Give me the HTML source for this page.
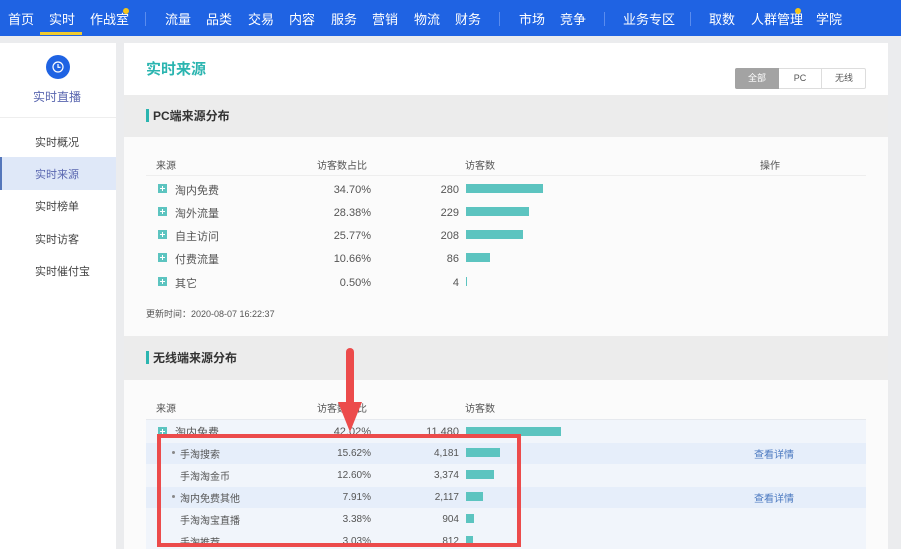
<!DOCTYPE html>
<html><head><meta charset="utf-8">
<style>
*{margin:0;padding:0;box-sizing:border-box}
body{width:901px;height:549px;overflow:hidden;background:#ebecee;font-family:"Liberation Sans","Noto Sans CJK SC",sans-serif;position:relative;color:#555}
.a{position:absolute;white-space:nowrap}
.nav{position:absolute;left:0;top:0;width:901px;height:36px;background:#1f63e3}
.nav span{position:absolute;top:9px;color:#fff;font-size:13px}
.sep{position:absolute;top:12px;width:1px;height:14px;background:#5a8cee}
.dot{position:absolute;width:6px;height:6px;border-radius:3px;background:#f5c518}
.t{font-size:10px;color:#555}
.n{margin-top:2px}
.bar{position:absolute;height:9px;background:#5cc4c0}
.plus{position:absolute;width:9px;height:9px;background:#5cc4c0}
.plus:before{content:"";position:absolute;left:2px;top:4px;width:5px;height:1px;background:#fff}
.plus:after{content:"";position:absolute;left:4px;top:2px;width:1px;height:5px;background:#fff}
.r{text-align:right}
</style></head><body>
<div class="nav">
<span style="left:8px">首页</span>
<span style="left:49px;color:#fff">实时</span>
<div class="a" style="left:40px;top:32px;width:42px;height:3px;background:#f1cb2e"></div>
<span style="left:90px">作战室</span><div class="dot" style="left:123px;top:8px"></div>
<div class="sep" style="left:145px"></div>
<span style="left:165px">流量</span><span style="left:206px">品类</span><span style="left:248px">交易</span><span style="left:289px">内容</span><span style="left:331px">服务</span><span style="left:372px">营销</span><span style="left:414px">物流</span><span style="left:455px">财务</span>
<div class="sep" style="left:499px"></div>
<span style="left:519px">市场</span><span style="left:560px">竞争</span>
<div class="sep" style="left:604px"></div>
<span style="left:623px">业务专区</span>
<div class="sep" style="left:690px"></div>
<span style="left:709px">取数</span><span style="left:751px">人群管理</span><div class="dot" style="left:795px;top:8px"></div>
<span style="left:816px">学院</span>
</div>
<!-- sidebar -->
<div class="a" style="left:0;top:43px;width:116px;height:506px;background:#fff"></div>
<div class="a" style="left:0;top:117px;width:116px;height:1px;background:#eee"></div>
<div class="a" style="left:46px;top:55px;width:24px;height:24px;border-radius:12px;background:#1f63e3"></div>
<svg class="a" style="left:51px;top:60px" width="14" height="14" viewBox="0 0 14 14"><circle cx="7" cy="7" r="5" fill="none" stroke="#fff" stroke-width="1.2"/><path d="M7 4v3.3h2.5" fill="none" stroke="#fff" stroke-width="1.2"/></svg>
<div class="a" style="left:33px;top:88px;font-size:12px;color:#5a67b0">实时直播</div>
<div class="a" style="left:0;top:157px;width:116px;height:33px;background:#dfe8f8;border-left:2px solid #5577bb"></div>
<div class="a" style="left:35px;top:134px;font-size:11px;color:#444">实时概况</div>
<div class="a" style="left:35px;top:166px;font-size:11px;color:#5a67b0">实时来源</div>
<div class="a" style="left:35px;top:198px;font-size:11px;color:#444">实时榜单</div>
<div class="a" style="left:35px;top:231px;font-size:11px;color:#444">实时访客</div>
<div class="a" style="left:35px;top:263px;font-size:11px;color:#444">实时催付宝</div>
<!-- main -->
<div class="a" style="left:124px;top:43px;width:764px;height:52px;background:#fff"></div>
<div class="a" style="left:146px;top:58px;font-size:15px;font-weight:bold;color:#2bb5b0">实时来源</div>
<div class="a" style="left:735px;top:68px;width:131px;height:21px;border:1px solid #ddd;background:#fff;border-radius:2px"></div>
<div class="a" style="left:735px;top:68px;width:44px;height:21px;background:#a3a3a3;color:#fff;font-size:9px;text-align:center;line-height:21px;border-radius:2px 0 0 2px">全部</div>
<div class="a" style="left:779px;top:69px;width:43px;height:19px;border-right:1px solid #ddd;font-size:9px;text-align:center;line-height:19px;color:#555">PC</div>
<div class="a" style="left:822px;top:69px;width:44px;font-size:9px;text-align:center;line-height:19px;color:#555">无线</div>
<div class="a" style="left:124px;top:95px;width:764px;height:42px;background:#ececec"></div>
<div class="a" style="left:146px;top:109px;width:3px;height:13px;background:#2bb5b0"></div>
<div class="a" style="left:153px;top:107px;font-size:12px;font-weight:bold;color:#333">PC端来源分布</div>
<div class="a" style="left:124px;top:137px;width:764px;height:199px;background:#fbfbfb"></div>
<div class="a t" style="left:156px;top:157px">来源</div>
<div class="a t" style="left:317px;top:157px">访客数占比</div>
<div class="a t" style="left:465px;top:157px">访客数</div>
<div class="a t" style="left:760px;top:157px">操作</div>
<div class="a" style="left:146px;top:175px;width:720px;height:1px;background:#eee"></div>
<div class="plus" style="left:158px;top:184px"></div><div class="a t" style="left:175px;top:182px;font-size:11px">淘内免费</div><div class="a t r n" style="left:300px;top:182px;width:71px;font-size:11px">34.70%</div><div class="a t r n" style="left:400px;top:182px;width:59px;font-size:11px">280</div><div class="bar" style="left:466px;top:184px;width:77px"></div>
<div class="plus" style="left:158px;top:207px"></div><div class="a t" style="left:175px;top:205px;font-size:11px">淘外流量</div><div class="a t r n" style="left:300px;top:205px;width:71px;font-size:11px">28.38%</div><div class="a t r n" style="left:400px;top:205px;width:59px;font-size:11px">229</div><div class="bar" style="left:466px;top:207px;width:63px"></div>
<div class="plus" style="left:158px;top:230px"></div><div class="a t" style="left:175px;top:228px;font-size:11px">自主访问</div><div class="a t r n" style="left:300px;top:228px;width:71px;font-size:11px">25.77%</div><div class="a t r n" style="left:400px;top:228px;width:59px;font-size:11px">208</div><div class="bar" style="left:466px;top:230px;width:57px"></div>
<div class="plus" style="left:158px;top:253px"></div><div class="a t" style="left:175px;top:251px;font-size:11px">付费流量</div><div class="a t r n" style="left:300px;top:251px;width:71px;font-size:11px">10.66%</div><div class="a t r n" style="left:400px;top:251px;width:59px;font-size:11px">86</div><div class="bar" style="left:466px;top:253px;width:24px"></div>
<div class="plus" style="left:158px;top:277px"></div><div class="a t" style="left:175px;top:275px;font-size:11px">其它</div><div class="a t r n" style="left:300px;top:275px;width:71px;font-size:11px">0.50%</div><div class="a t r n" style="left:400px;top:275px;width:59px;font-size:11px">4</div><div class="bar" style="left:466px;top:277px;width:1px"></div>
<div class="a t" style="left:146px;top:307px;font-size:9px">更新时间：2020-08-07 16:22:37</div>
<div class="a" style="left:124px;top:336px;width:764px;height:44px;background:#ececec"></div>
<div class="a" style="left:146px;top:351px;width:3px;height:13px;background:#2bb5b0"></div>
<div class="a" style="left:153px;top:349px;font-size:12px;font-weight:bold;color:#333">无线端来源分布</div>
<div class="a" style="left:124px;top:380px;width:764px;height:169px;background:#fbfbfb"></div>
<div class="a t" style="left:156px;top:400px">来源</div>
<div class="a t" style="left:317px;top:400px">访客数占比</div>
<div class="a t" style="left:465px;top:400px">访客数</div>
<div class="a" style="left:146px;top:419px;width:720px;height:130px;background:#f1f5fb"></div>
<div class="a" style="left:146px;top:419px;width:720px;height:1px;background:#e6e9ee"></div>
<div class="a" style="left:146px;top:443px;width:720px;height:21px;background:#e6eefa"></div>
<div class="a" style="left:146px;top:487px;width:720px;height:21px;background:#e6eefa"></div>
<div class="plus" style="left:158px;top:427px"></div><div class="a t" style="left:175px;top:424px;font-size:11px">淘内免费</div><div class="a t r n" style="left:300px;top:424px;width:71px;font-size:11px">42.02%</div><div class="a t r n" style="left:400px;top:424px;width:59px;font-size:11px">11,480</div><div class="bar" style="left:466px;top:427px;width:95px"></div>
<div class="a" style="left:172px;top:451px;width:3px;height:3px;border-radius:2px;background:#888"></div>
<div class="a t" style="left:180px;top:446px">手淘搜索</div><div class="a t r n" style="left:300px;top:446px;width:71px">15.62%</div><div class="a t r n" style="left:400px;top:446px;width:59px">4,181</div><div class="bar" style="left:466px;top:448px;width:34px"></div>
<div class="a t" style="left:754px;top:446px;color:#4a78c0">查看详情</div>
<div class="a t" style="left:180px;top:468px">手淘淘金币</div><div class="a t r n" style="left:300px;top:468px;width:71px">12.60%</div><div class="a t r n" style="left:400px;top:468px;width:59px">3,374</div><div class="bar" style="left:466px;top:470px;width:28px"></div>
<div class="a" style="left:172px;top:495px;width:3px;height:3px;border-radius:2px;background:#888"></div>
<div class="a t" style="left:180px;top:490px">淘内免费其他</div><div class="a t r n" style="left:300px;top:490px;width:71px">7.91%</div><div class="a t r n" style="left:400px;top:490px;width:59px">2,117</div><div class="bar" style="left:466px;top:492px;width:17px"></div>
<div class="a t" style="left:754px;top:490px;color:#4a78c0">查看详情</div>
<div class="a t" style="left:180px;top:512px">手淘淘宝直播</div><div class="a t r n" style="left:300px;top:512px;width:71px">3.38%</div><div class="a t r n" style="left:400px;top:512px;width:59px">904</div><div class="bar" style="left:466px;top:514px;width:8px"></div>
<div class="a t" style="left:180px;top:534px">手淘推荐</div><div class="a t r n" style="left:300px;top:534px;width:71px">3.03%</div><div class="a t r n" style="left:400px;top:534px;width:59px">812</div><div class="bar" style="left:466px;top:536px;width:7px"></div>
<!-- annotation -->
<div class="a" style="left:157px;top:434px;width:364px;height:113px;border:4px solid #ec4b4b"></div>
<svg class="a" style="left:336px;top:348px" width="28" height="86" viewBox="0 0 28 86"><path d="M14 4V56" stroke="#ec4b4b" stroke-width="8" stroke-linecap="round"/><path d="M2 54H26L14 84Z" fill="#ec4b4b"/></svg>
</body></html>
